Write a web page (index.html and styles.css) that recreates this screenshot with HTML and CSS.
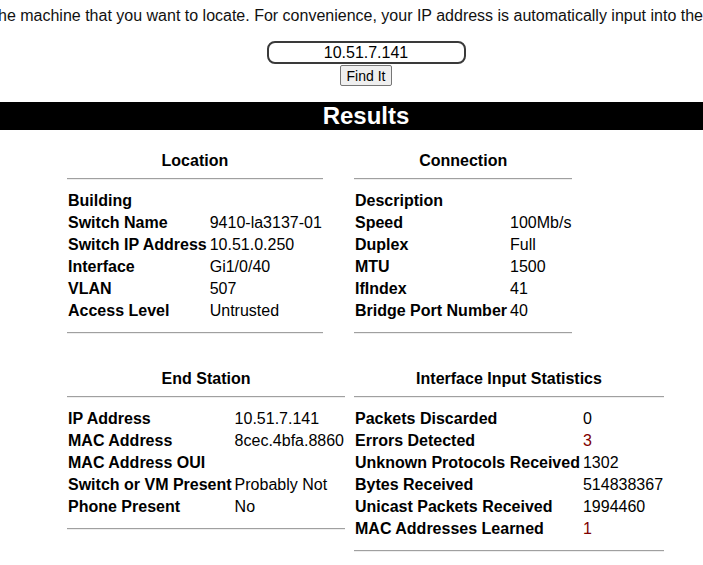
FILE: index.html
```html
<!DOCTYPE html>
<html>
<head>
<meta charset="utf-8">
<title>Locate</title>
<link rel="stylesheet" href="styles.css">
</head>
<body>
<div class="page">
  <p class="intro">he machine that you want to locate. For convenience, your IP address is automatically input into the</p>
  <form class="search">
    <input class="addr" type="text" value="10.51.7.141">
    <button class="find" type="button">Find It</button>
  </form>
  <h2 class="bar">Results</h2>
  <div class="grid">
    <section class="sec">
      <h3 class="sec-title">Location</h3>
      <div class="rule"></div>
      <table class="kv">
        <tr><th>Building</th><td></td></tr>
        <tr><th>Switch Name</th><td>9410-la3137-01</td></tr>
        <tr><th>Switch IP Address</th><td>10.51.0.250</td></tr>
        <tr><th>Interface</th><td>Gi1/0/40</td></tr>
        <tr><th>VLAN</th><td>507</td></tr>
        <tr><th>Access Level</th><td>Untrusted</td></tr>
      </table>
      <div class="rule end"></div>
    </section>
    <section class="sec">
      <h3 class="sec-title">Connection</h3>
      <div class="rule"></div>
      <table class="kv">
        <tr><th>Description</th><td></td></tr>
        <tr><th>Speed</th><td>100Mb/s</td></tr>
        <tr><th>Duplex</th><td>Full</td></tr>
        <tr><th>MTU</th><td>1500</td></tr>
        <tr><th>IfIndex</th><td>41</td></tr>
        <tr><th>Bridge Port Number</th><td>40</td></tr>
      </table>
      <div class="rule end"></div>
    </section>
    <section class="sec">
      <h3 class="sec-title">End Station</h3>
      <div class="rule"></div>
      <table class="kv">
        <tr><th>IP Address</th><td>10.51.7.141</td></tr>
        <tr><th>MAC Address</th><td>8cec.4bfa.8860</td></tr>
        <tr><th>MAC Address OUI</th><td></td></tr>
        <tr><th>Switch or VM Present</th><td>Probably Not</td></tr>
        <tr><th>Phone Present</th><td>No</td></tr>
      </table>
      <div class="rule end"></div>
    </section>
    <section class="sec">
      <h3 class="sec-title">Interface Input Statistics</h3>
      <div class="rule"></div>
      <table class="kv">
        <tr><th>Packets Discarded</th><td>0</td></tr>
        <tr><th>Errors Detected</th><td class="warn">3</td></tr>
        <tr><th>Unknown Protocols Received</th><td>1302</td></tr>
        <tr><th>Bytes Received</th><td>514838367</td></tr>
        <tr><th>Unicast Packets Received</th><td>1994460</td></tr>
        <tr><th>MAC Addresses Learned</th><td class="warn">1</td></tr>
      </table>
      <div class="rule end"></div>
    </section>
  </div>
</div>
</body>
</html>
```
FILE: styles.css
```css
html, body {
  margin: 0;
  padding: 0;
  background: #fff;
  overflow: hidden;
}
body {
  font-family: "Liberation Sans", Arial, sans-serif;
  font-size: 16px;
  color: #000;
}
.page {
  width: 732px;
}
.intro {
  margin: 7px 0 0 -2px;
  line-height: 18px;
  white-space: nowrap;
  color: #111;
}
.search {
  margin: 16px 0 0;
  display: flex;
  flex-direction: column;
  align-items: center;
}
.addr {
  box-sizing: border-box;
  width: 199px;
  height: 23px;
  margin: 0;
  padding: 0 6px;
  border: 2px solid #3a3a3a;
  border-radius: 8px;
  font-family: "Liberation Sans", Arial, sans-serif;
  font-size: 16px;
  text-align: center;
  color: #000;
  outline: none;
}
.find {
  box-sizing: border-box;
  margin: 1px 0 0;
  height: 21px;
  padding: 0 6px;
  border: 1px solid #767676;
  border-radius: 2px;
  background: #efefef;
  font-family: "Liberation Sans", Arial, sans-serif;
  font-size: 14px;
  color: #000;
}
.bar {
  margin: 16px 0 0;
  height: 28px;
  line-height: 28px;
  background: #000;
  color: #fff;
  text-align: center;
  font-size: 24px;
  font-weight: bold;
}
.grid {
  margin-top: 20px;
  padding-left: 67px;
  display: grid;
  grid-template-columns: 287px max-content;
  row-gap: 34px;
  align-items: start;
}
.sec {
  width: max-content;
  display: flex;
  flex-direction: column;
}
.sec-title {
  margin: 0;
  height: 22px;
  line-height: 22px;
  font-size: 16px;
  font-weight: bold;
  text-align: center;
}
.rule {
  margin: 6px 0 10px;
  border-top: 1px solid #a0a0a0;
  border-bottom: 1px solid #eeeeee;
}
.rule.end {
  margin: 10px 0 0;
}
.kv {
  border-collapse: collapse;
}
.kv th, .kv td {
  padding: 2px 1px;
  line-height: 18px;
  font-size: 16px;
  text-align: left;
  white-space: nowrap;
  vertical-align: top;
}
.kv th {
  font-weight: bold;
  padding-right: 2px;
}
.kv td {
  font-weight: normal;
}
.kv td.warn {
  color: #800000;
}
```
